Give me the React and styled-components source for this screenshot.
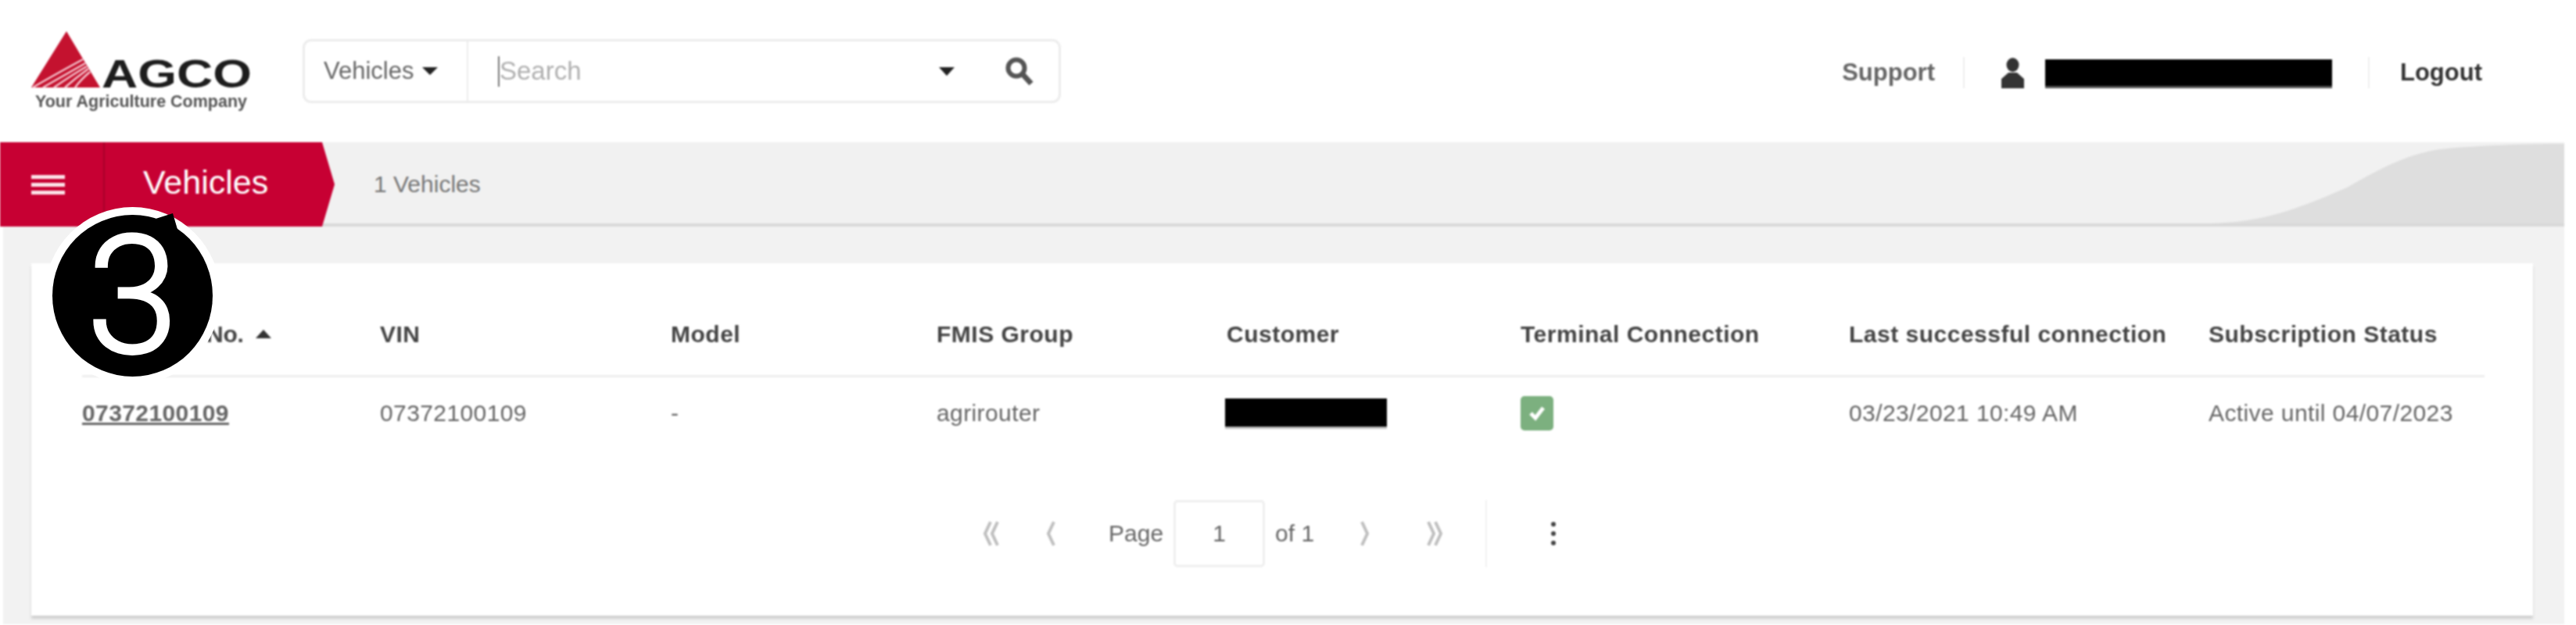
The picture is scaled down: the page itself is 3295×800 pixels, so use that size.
import React from 'react'
import styled, { createGlobalStyle } from 'styled-components'

const GlobalStyle = createGlobalStyle`
  html, body {
    margin: 0;
    padding: 0;
    background: #fff;
    font-family: "Liberation Sans", Arial, sans-serif;
  }
`

const COLUMNS = '381px 372px 340px 371px 376px 420px 460px 352px'

const Root = styled.div`
  position: relative;
  width: 3295px;
  height: 800px;
  overflow: hidden;
`

const Blurred = styled.div`
  width: 3280px;
  filter: blur(1px);
`

const Header = styled.header`
  display: flex;
  align-items: center;
  height: 182px;
  padding: 0 105px 0 40px;
  box-sizing: border-box;
`

const Logo = styled.svg`
  display: block;
  width: 290px;
  height: 110px;
  margin-top: 3px;
  flex: none;
`

const SearchBox = styled.div`
  display: flex;
  align-items: stretch;
  width: 970px;
  height: 82px;
  margin-left: 57px;
  box-sizing: border-box;
  border: 3px solid #ececec;
  border-radius: 11px;
`

const Scope = styled.div`
  display: flex;
  align-items: center;
  width: 209px;
  padding-left: 24px;
  box-sizing: border-box;
  border-right: 2px solid #ececec;
  font-size: 31px;
  color: #666;
`

const SmallCaret = styled.span`
  width: 0;
  height: 0;
  margin-left: 11px;
  border-left: 10px solid transparent;
  border-right: 10px solid transparent;
  border-top: 10px solid #222;
`

const SearchField = styled.div`
  display: flex;
  flex: 1;
  align-items: center;
  padding: 0 32px 0 38px;
`

const TextCursor = styled.span`
  width: 2px;
  height: 39px;
  background: #777;
`

const Placeholder = styled.span`
  font-size: 33px;
  color: #b0b0b0;
`

const FieldCaret = styled(SmallCaret)`
  margin-left: auto;
  border-top-width: 11px;
`

const SearchIcon = styled.svg`
  width: 36px;
  height: 37px;
  margin-left: 65px;
`

const UserMenu = styled.nav`
  display: flex;
  align-items: center;
  margin-left: auto;
  padding-top: 4px;
`

const MenuLink = styled.a`
  font-size: 31px;
  font-weight: 700;
  color: ${(p) => (p.$dark ? '#333' : '#666')};
`

const MenuDivider = styled.span`
  width: 2px;
  height: 40px;
  margin: 0 ${(p) => p.$right}px 0 ${(p) => p.$left}px;
  background: #efefef;
`

const UserIcon = styled.svg`
  width: 31px;
  height: 39px;
`

const Redacted = styled.span`
  display: block;
  width: ${(p) => p.$w}px;
  height: ${(p) => p.$h}px;
  background: #000;
  border-bottom: 3px solid ${(p) => p.$fringe};
`

const NameBlock = styled(Redacted)`
  margin: 3px 0 0 26px;
`

const CustomerBlock = styled(Redacted)`
  margin-left: -2px;
`

const Strip = styled.div`
  position: relative;
  display: flex;
  align-items: center;
  height: 104px;
  background: #f1f1f1;
  border-bottom: 4px solid #d9d9d9;
`

const StripCurve = styled.svg`
  position: absolute;
  right: 0;
  top: 0;
  width: 453px;
  height: 104px;
`

const RedTab = styled.div`
  display: flex;
  align-items: center;
  width: 428px;
  height: 108px;
  margin-bottom: -4px;
  flex: none;
  background: #c70033;
  clip-path: polygon(0 0, 412px 0, 428px 50%, 412px 100%, 0 100%);
`

const MenuButton = styled.button`
  display: flex;
  flex-direction: column;
  justify-content: center;
  gap: 5px;
  width: 134px;
  height: 100%;
  padding: 0 49px 0 40px;
  box-sizing: border-box;
  background: none;
  border: none;
  border-right: 2px solid #a8002b;
`

const MenuBar = styled.span`
  display: block;
  height: 5px;
  background: #fbe3e8;
`

const PageTitle = styled.h1`
  margin: -6px 0 0 49px;
  font-size: 43px;
  font-weight: 400;
  color: #fff;
`

const Count = styled.span`
  margin: 3px 0 0 50px;
  font-size: 30px;
  color: #777;
`

const Main = styled.main`
  height: 509px;
  margin-left: 4px;
  padding: 47px 40px 0 36px;
  box-sizing: border-box;
  background: #f2f2f2;
`

const Card = styled.section`
  height: 451px;
  padding: 0 62px 0 65px;
  box-sizing: border-box;
  background: #fff;
  box-shadow: 0 4px 3px #cfcfcf;
`

const HeadRow = styled.div`
  display: grid;
  grid-template-columns: ${COLUMNS};
  align-items: center;
  height: 146px;
  padding-top: 38px;
  box-sizing: border-box;
  border-bottom: 3px solid #eee;
`

const HeadCell = styled.div`
  display: flex;
  align-items: center;
  font-size: 30px;
  font-weight: 700;
  letter-spacing: ${(p) => (p.$tight ? '-0.2px' : '0.5px')};
  color: #444;
  white-space: nowrap;
`

const SortArrow = styled.span`
  width: 0;
  height: 0;
  margin-left: 15px;
  border-left: 10px solid transparent;
  border-right: 10px solid transparent;
  border-bottom: 11px solid #333;
`

const BodyRow = styled.div`
  display: grid;
  grid-template-columns: ${COLUMNS};
  align-items: center;
  height: 92px;
`

const BodyCell = styled.div`
  font-size: 30px;
  letter-spacing: 0.4px;
  color: #666;
  white-space: nowrap;
`

const RowLink = styled.a`
  font-weight: 700;
  text-decoration: underline;
  color: #666;
`

const ConnectedBox = styled.span`
  display: flex;
  align-items: center;
  justify-content: center;
  width: 42px;
  height: 44px;
  border-radius: 5px;
  background: #7cb07f;
`

const Pager = styled.div`
  display: flex;
  align-items: center;
  height: 86px;
  margin-top: 65px;
  padding-left: 1136px;
  font-size: 30px;
  color: #666;
`

const PagerButton = styled.button`
  display: flex;
  align-items: center;
  justify-content: center;
  width: 60px;
  height: 60px;
  margin-left: ${(p) => p.$gap || 0}px;
  padding: 0;
  background: none;
  border: none;
`

const PagerLabel = styled.span`
  margin-left: ${(p) => p.$gap}px;
`

const PageInput = styled.div`
  display: flex;
  align-items: center;
  justify-content: center;
  width: 117px;
  height: 86px;
  margin-left: 13px;
  box-sizing: border-box;
  border: 3px solid #efefef;
  border-radius: 5px;
`

const PagerDivider = styled.span`
  width: 2px;
  height: 86px;
  margin-left: 38px;
  background: #f2f2f2;
`

const DotColumn = styled.span`
  display: flex;
  flex-direction: column;
  justify-content: space-between;
  height: 30px;
`

const Dot = styled.span`
  width: 6px;
  height: 6px;
  border-radius: 50%;
  background: #444;
`

const StepBadge = styled.div`
  position: absolute;
  left: 67px;
  top: 275px;
  display: flex;
  align-items: center;
  justify-content: center;
  width: 205px;
  height: 207px;
  border-radius: 50%;
  background: #000;
  box-shadow: 0 0 0 10px #fff;
  font-family: Roboto, "Liberation Sans", sans-serif;
  font-size: 210px;
  font-weight: 300;
  -webkit-text-stroke: 4px #fff;
  line-height: 1;
  color: #fff;
`

const BadgeTail = styled.svg`
  position: absolute;
  left: 120px;
  top: -6px;
  width: 48px;
  height: 32px;
`

const Chevron = ({ flip, double }) => (
  <svg width="32" height="34" viewBox="0 0 32 34" fill="none" stroke="#bfbfbf" strokeWidth="4"
    style={flip ? { transform: 'scaleX(-1)' } : undefined}>
    <path d={double ? 'M12 2 5 17l7 15' : 'M19 2l-7 15 7 15'} />
    {double && <path d="M21 2l-7 15 7 15" />}
  </svg>
)

const AgcoLogo = () => (
  <Logo viewBox="0 0 290 110">
    <path d="M45 2 88 74H0Z" fill="#c4122f" />
    <g fill="none" stroke="#f6c6cf" strokeWidth="2.4">
      <path d="M66 38C44 50 22 62 2 74" />
      <path d="M69 43C50 54 32 64 15 74" />
      <path d="M71 47C55 56 42 65 29 74" />
      <path d="M73 50C62 58 52 66 43 74" />
      <path d="M75 54C68 60 61 67 56 74" />
    </g>
    <text x="90" y="74" fontFamily="Liberation Sans" fontWeight="700" fontSize="50"
      textLength="192" lengthAdjust="spacingAndGlyphs" fill="#1d1d1d">AGCO</text>
    <text x="5" y="99" fontFamily="Liberation Sans" fontWeight="700" fontSize="22"
      textLength="271" lengthAdjust="spacingAndGlyphs" fill="#555">Your Agriculture Company</text>
  </Logo>
)

const App = () => (
  <Root>
    <GlobalStyle />
    <Blurred>
      <Header>
        <AgcoLogo />
        <SearchBox>
          <Scope>
            Vehicles
            <SmallCaret />
          </Scope>
          <SearchField>
            <TextCursor />
            <Placeholder>Search</Placeholder>
            <FieldCaret />
            <SearchIcon viewBox="0 0 36 37" fill="none" stroke="#555">
              <circle cx="14" cy="14" r="10.5" strokeWidth="6" />
              <path d="M22 22 33 34" strokeWidth="7" />
            </SearchIcon>
          </SearchField>
        </SearchBox>
        <UserMenu>
          <MenuLink>Support</MenuLink>
          <MenuDivider $left={36} $right={46} />
          <UserIcon viewBox="0 0 31 39" fill="#333">
            <ellipse cx="15.5" cy="9" rx="8" ry="9" />
            <path d="M10 19h11l9 8v12H1V27Z" />
          </UserIcon>
          <NameBlock $w={367} $h={34} $fringe="#555" />
          <MenuDivider $left={46} $right={39} />
          <MenuLink $dark>Logout</MenuLink>
        </UserMenu>
      </Header>

      <Strip>
        <StripCurve viewBox="0 0 453 104">
          <path d="M0 104C60 102 98 92 175 58 225 30 260 10 315 7 370 3 420 2 453 2V104Z" fill="#dedede" />
        </StripCurve>
        <RedTab>
          <MenuButton>
            <MenuBar />
            <MenuBar />
            <MenuBar />
          </MenuButton>
          <PageTitle>Vehicles</PageTitle>
        </RedTab>
        <Count>1 Vehicles</Count>
      </Strip>

      <Main>
        <Card>
          <HeadRow>
            <HeadCell $tight>
              Telematics No.
              <SortArrow />
            </HeadCell>
            <HeadCell>VIN</HeadCell>
            <HeadCell>Model</HeadCell>
            <HeadCell>FMIS Group</HeadCell>
            <HeadCell>Customer</HeadCell>
            <HeadCell>Terminal Connection</HeadCell>
            <HeadCell>Last successful connection</HeadCell>
            <HeadCell>Subscription Status</HeadCell>
          </HeadRow>
          <BodyRow>
            <BodyCell><RowLink>07372100109</RowLink></BodyCell>
            <BodyCell>07372100109</BodyCell>
            <BodyCell>-</BodyCell>
            <BodyCell>agrirouter</BodyCell>
            <BodyCell><CustomerBlock $w={207} $h={36} $fringe="#bbb" /></BodyCell>
            <BodyCell>
              <ConnectedBox>
                <svg width="22" height="20" viewBox="0 0 22 20" fill="none" stroke="#fff" strokeWidth="5">
                  <path d="M3 10l6 6L19 3" />
                </svg>
              </ConnectedBox>
            </BodyCell>
            <BodyCell>03/23/2021 10:49 AM</BodyCell>
            <BodyCell>Active until 04/07/2023</BodyCell>
          </BodyRow>
          <Pager>
            <PagerButton><Chevron double /></PagerButton>
            <PagerButton $gap={14}><Chevron /></PagerButton>
            <PagerLabel $gap={43}>Page</PagerLabel>
            <PageInput>1</PageInput>
            <PagerLabel $gap={13}>of 1</PagerLabel>
            <PagerButton $gap={34}><Chevron flip /></PagerButton>
            <PagerButton $gap={27}><Chevron flip double /></PagerButton>
            <PagerDivider />
            <PagerButton $gap={55}>
              <DotColumn>
                <Dot />
                <Dot />
                <Dot />
              </DotColumn>
            </PagerButton>
          </Pager>
        </Card>
      </Main>
    </Blurred>

    <StepBadge>
      3
      <BadgeTail viewBox="0 0 48 32">
        <path d="M9 12 34 4l7 24Z" fill="#000" />
      </BadgeTail>
    </StepBadge>
  </Root>
)

export default App
